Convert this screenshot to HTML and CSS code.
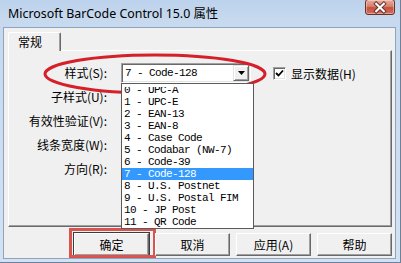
FILE: index.html
```html
<!DOCTYPE html>
<html lang="zh-CN">
<head>
<meta charset="utf-8">
<title>Microsoft BarCode Control 15.0 属性</title>
<link rel="stylesheet" href="styles.css">
</head>
<body>
<div class="window">
  <div class="titlebar">
    <span class="title">Microsoft BarCode Control 15.0 属性</span>
    <span class="close">
      <svg width="29" height="15" viewBox="0 0 29 15">
        <path d="M10.5 3.5 L18.5 11.5 M18.5 3.5 L10.5 11.5" stroke="#5a2a24" stroke-width="4" stroke-linecap="square"/>
        <path d="M10.5 3.5 L18.5 11.5 M18.5 3.5 L10.5 11.5" stroke="#fff" stroke-width="2.2" stroke-linecap="square"/>
      </svg>
    </span>
  </div>
  <div class="client">
    <div class="tabs"><div class="tab">常规</div></div>
    <div class="panel">
      <svg class="ellipse" width="236" height="48" viewBox="0 0 236 48">
        <ellipse cx="118" cy="23" rx="110" ry="19" fill="none" stroke="#d5202a" stroke-width="3"/>
      </svg>
      <div class="row">
        <span class="lbl">样式(S):</span>
        <div class="combo">
          <span class="combo-val">7 - Code-128</span>
          <span class="combo-btn">
            <svg width="7" height="4" viewBox="0 0 7 4"><path d="M0 0 H7 L3.5 4 Z" fill="#000"/></svg>
          </span>
          <ul class="list">
            <li>0 - UPC-A</li>
            <li>1 - UPC-E</li>
            <li>2 - EAN-13</li>
            <li>3 - EAN-8</li>
            <li>4 - Case Code</li>
            <li>5 - Codabar (NW-7)</li>
            <li>6 - Code-39</li>
            <li class="sel">7 - Code-128</li>
            <li>8 - U.S. Postnet</li>
            <li>9 - U.S. Postal FIM</li>
            <li>10 - JP Post</li>
            <li>11 - QR Code</li>
          </ul>
        </div>
        <span class="chk">
          <span class="box">
            <svg width="9" height="9" viewBox="0 0 9 9"><path d="M1 4 L3.5 6.5 L8 1.5" fill="none" stroke="#000" stroke-width="1.8"/></svg>
          </span>
          <span class="chk-text">显示数据(H)</span>
        </span>
      </div>
      <div class="row"><span class="lbl">子样式(U):</span></div>
      <div class="row"><span class="lbl">有效性验证(V):</span></div>
      <div class="row"><span class="lbl">线条宽度(W):</span></div>
      <div class="row"><span class="lbl">方向(R):</span></div>
    </div>
    <div class="buttons">
      <span class="btn default">确定<span class="mark"></span></span>
      <span class="btn">取消</span>
      <span class="btn">应用(A)</span>
      <span class="btn">帮助</span>
    </div>
  </div>
</div>
</body>
</html>
```

FILE: styles.css
```css
* { box-sizing: border-box; }
html, body { margin: 0; padding: 0; }
body {
  width: 401px;
  height: 263px;
  overflow: hidden;
  background: #c9dbef;
  font-family: "Noto Sans CJK SC", sans-serif;
  font-size: 12px;
  color: #000;
}
.window {
  width: 401px;
  height: 263px;
  display: flex;
  flex-direction: column;
  background: linear-gradient(#bcd2ec 0px, #c6d9ee 20px, #d3e2f3 100%);
  border-right: 1px solid #6d8199;
  border-bottom: 1px solid #6d8199;
}
.titlebar {
  height: 27px;
  flex: none;
  display: flex;
  align-items: center;
  justify-content: space-between;
  padding: 0 5px 0 8px;
}
.title {
  font-family: "Noto Sans", "Noto Sans CJK SC", sans-serif;
  font-size: 12.4px;
  color: #000;
  margin-top: -1px;
}
.close {
  width: 30px;
  height: 16px;
  margin-top: -13px;
  border: 1px solid #6b3028;
  border-radius: 3px;
  background: linear-gradient(#e9a999 0%, #d88170 45%, #c4503c 55%, #d5705c 100%);
  box-shadow: inset 0 0 0 1px rgba(255,255,255,0.35);
  display: flex;
  align-items: center;
  justify-content: center;
}
.close svg { display: block; }
.client {
  flex: 1;
  margin: 0 4px 3px 3px;
  background: #f0f0f0;
  border: 1px solid #8ea3bd;
  display: flex;
  flex-direction: column;
  padding: 4px 3px 0 4px;
}
.tabs {
  display: flex;
  height: 19px;
  position: relative;
  z-index: 2;
  margin-bottom: -1px;
}
.tab {
  width: 53px;
  height: 19px;
  padding-left: 9px;
  line-height: 17px;
  background: #f0f0f0;
  border-top: 1px solid #fff;
  border-left: 1px solid #fff;
  border-right: 1px solid #696969;
  box-shadow: inset -1px 0 0 #a0a0a0;
  border-radius: 2px 2px 0 0;
}
.panel {
  position: relative;
  height: 177px;
  border-top: 1px solid #fff;
  border-left: 1px solid #fff;
  border-right: 1px solid #696969;
  border-bottom: 1px solid #696969;
  box-shadow: inset -1px -1px 0 #a0a0a0;
  padding-top: 12px;
  display: flex;
  flex-direction: column;
  gap: 4px;
}
.ellipse {
  position: absolute;
  left: 28px;
  top: 0;
  z-index: 1;
  pointer-events: none;
}
.row {
  height: 20px;
  display: flex;
  align-items: center;
}
.lbl {
  width: 98px;
  text-align: right;
  line-height: 20px;
  flex: none;
}
.combo {
  position: relative;
  margin-left: 14px;
  width: 130px;
  height: 20px;
  flex: none;
  background: #fff;
  border-top: 1px solid #a0a0a0;
  border-left: 1px solid #a0a0a0;
  border-right: 1px solid #fff;
  border-bottom: 1px solid #fff;
  box-shadow: inset 1px 1px 0 #696969, inset -1px -1px 0 #e3e3e3;
  display: flex;
  align-items: center;
  padding: 1px 1px 1px 2px;
}
.combo-val, .list li {
  font-family: "Liberation Mono", monospace;
  font-size: 11px;
  letter-spacing: -0.6px;
  white-space: pre;
}
.combo-val {
  flex: 1;
  padding-left: 1px;
}
.combo-btn {
  width: 16px;
  height: 16px;
  background: #f0f0f0;
  border-top: 1px solid #e3e3e3;
  border-left: 1px solid #e3e3e3;
  border-right: 1px solid #696969;
  border-bottom: 1px solid #696969;
  box-shadow: inset 1px 1px 0 #fff, inset -1px -1px 0 #a0a0a0;
  display: flex;
  align-items: center;
  justify-content: center;
}
.combo-btn svg { display: block; }
.list {
  position: absolute;
  left: -1px;
  top: 19px;
  width: 133px;
  height: 146px;
  margin: 0;
  padding: 0;
  list-style: none;
  background: #fff;
  border: 1px solid #5a5a5a;
  z-index: 3;
  overflow: hidden;
}
.list::before {
  content: "";
  position: absolute;
  left: 0;
  right: 0;
  top: 0;
  height: 3px;
  background: #fff;
}
.list li {
  height: 12px;
  line-height: 12px;
  padding-left: 2px;
}
.list li.sel {
  background: #3399ff;
  color: #fff;
}
.chk {
  margin-left: 22px;
  display: flex;
  align-items: center;
}
.box {
  width: 13px;
  height: 13px;
  background: #fff;
  border-top: 1px solid #a0a0a0;
  border-left: 1px solid #a0a0a0;
  border-right: 1px solid #fff;
  border-bottom: 1px solid #fff;
  box-shadow: inset 1px 1px 0 #696969, inset -1px -1px 0 #e3e3e3;
  display: flex;
  align-items: center;
  justify-content: center;
}
.box svg { display: block; }
.chk-text { margin-left: 5px; }
.buttons {
  display: flex;
  justify-content: flex-end;
  gap: 6px;
  margin-top: 6px;
  padding-right: 0;
}
.btn {
  position: relative;
  width: 75px;
  height: 23px;
  background: #f0f0f0;
  border-top: 1px solid #fff;
  border-left: 1px solid #fff;
  border-right: 1px solid #696969;
  border-bottom: 1px solid #696969;
  box-shadow: inset -1px -1px 0 #a0a0a0;
  display: flex;
  align-items: center;
  justify-content: center;
  line-height: 1;
}
.btn.default {
  outline: 1px solid #3c3c3c;
}
.mark {
  position: absolute;
  left: -6px;
  top: -6px;
  right: -8px;
  bottom: -3px;
  border: 3px solid #d9534f;
}
```
